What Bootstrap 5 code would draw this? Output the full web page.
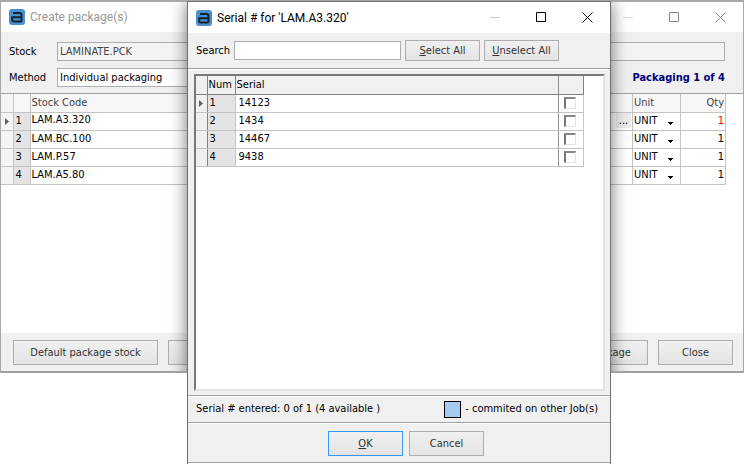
<!DOCTYPE html>
<html lang="en">
<head>
<meta charset="utf-8">
<meta name="viewport" content="width=device-width, initial-scale=1">
<title>Serial # for 'LAM.A3.320'</title>
<link rel="stylesheet" href="https://cdn.jsdelivr.net/npm/bootstrap@5.3.0/dist/css/bootstrap.min.css">
<style>
  body { font-family: "DejaVu Sans Condensed", "DejaVu Sans", sans-serif; font-size: 11px; line-height: 14px; color: #000; background: #fff; }
  .desktop { min-height: 100vh; overflow: hidden; }
  .win { background: #f0f0f0; border: 1px solid #8c8c8c; }
  .win-back { inset: 0 0 91px 0; overflow: hidden; border-color: #a8a8a8; border-top-width: 2px; border-bottom: 2px solid #a0a0a0; }
  .win-front { left: 187px; right: 133px; top: 1px; bottom: 0; border-color: #707070; border-bottom: 0; }
  .shade { left: 186px; right: 132px; top: 0; bottom: -40px; box-shadow: 0 0 16px rgba(0,0,0,.55); }
  .titlebar { height: 31px; background: #fff; padding-left: 8px; font-family: Roboto, "Open Sans", sans-serif; font-size: 12px; line-height: 16px; }
  .inactive { height: 30px; }
  .titlebar h1 { font: inherit; margin: 0; padding-left: 5px; }
  .inactive h1 { color: #999; }
  .cap { width: 46px; height: 30px; border: 0; background: none; padding: 0; color: #000; display: flex; align-items: center; justify-content: center; }
  .cap:disabled { color: #ccc; }
  .inactive .cap { color: #888; }
  .inactive .cap:disabled { color: #ddd; }
  .field { height: 19px; border: 1px solid #adadad; border-radius: 0; padding: 0 2px; font: inherit; color: #000; background: #fff; appearance: none; }
  .field.locked { background: #f4f4f4; color: #444; }
  .find { width: 167px; }
  .tool { border: 1px solid #adadad; border-radius: 0; padding: 0; width: 75px; height: 21px; font: inherit; color: #333; background: linear-gradient(#f0f0f0, #e4e4e4); }
  .tool.tall { height: 25px; }
  .tool.wide { width: 145px; }
  .tool.medium { width: 112px; }
  .tool.accept { border: 1px solid #3399ff; }
  .label-col { width: 48px; }
  .form-rows { padding: 10px 18px 6px 8px; gap: 7px; }
  .tool-row { padding: 7px 8px; }
  .grid { table-layout: fixed; width: 100%; border-collapse: collapse; margin: 0; }
  .grid th, .grid td { height: 18px; padding: 0 1px; border: 1px solid #c3c3c3; border-top: 0; font-weight: 400; line-height: 14px; vertical-align: middle; white-space: nowrap; overflow: hidden; text-align: left; }
  .grid td { padding-bottom: 1px; }
  .grid tr > :first-child { border-left: 0; }
  .grid .ind { background: #f4f4f4; padding: 0; text-align: center; }
  .grid .ind svg { display: block; margin: 0 auto; }
  .grid .num { background: #e4e4e4; padding-left: 2px; }
  .grid-back th { background: #f7f7f7; color: #444; }
  .grid-front th { background: #f0f0f0; border-color: #808080; }
  .grid-front .ind { border-right-color: #808080; background: #f0f0f0; }
  .grid-front tr > :nth-child(3) { border-right-color: #909090; }
  .grid-front td:nth-child(3) { padding-left: 3px; }
  .grid .qty { text-align: right; }
  .grid .short { color: #f00; }
  .unit { width: 100%; border: 0; padding: 0; height: 14px; font: inherit; color: #000; appearance: none; background: url("data:image/svg+xml,%3Csvg xmlns='http://www.w3.org/2000/svg' width='5' height='3'%3E%3Cpath d='M0 0h5v1H4v1H3v1H2V2H1V1H0z'/%3E%3C/svg%3E") no-repeat right 6px top 8px; display: block; }
  .dots { width: 15px; height: 15px; border: 0; padding: 0; background: #ececec; font: inherit; line-height: 12px; }
  .tick { appearance: none; display: block; width: 12px; height: 12px; margin: 0 0 0 4px; border: 1px solid #e3e3e3; border-top: 2px solid #888; border-left: 2px solid #777; background: #fff; }
  .rule { border-bottom: 1px solid #a0a0a0; box-shadow: 0 1px 0 #fff; }
  .back-body { padding-right: 17px; }
  .back-foot { padding: 7px 10px 6px 12px; gap: 10px; }
  .front-foot { padding: 8px 0 6px 14px; margin-bottom: 1px; gap: 6px; }
  .sunken { background: #fff; border: 2px solid #e3e3e3; border-top-color: #787878; border-left-color: #787878; margin: 5px 5px 4px 6px; padding-right: 19px; }
  .swatch { width: 17px; height: 17px; border: 1px solid #000; background: #a6caf0; }
  .stage { color: #000080; font-weight: 700; }
  .status { height: 27px; padding: 0 12px 0 8px; }
</style>
<script src="https://cdn.jsdelivr.net/npm/bootstrap@5.3.0/dist/js/bootstrap.bundle.min.js"></script>
</head>
<body>
<svg class="d-none" aria-hidden="true">
  <symbol id="logo" viewBox="0 0 16 16"><rect width="16" height="16" rx="3" fill="#4a90d0"/><path d="M4 4h6.500q2 0 2 2v5q0 1.500-1.500 1.500H5q-1.800 0-1.800-1.500V8.300H13" fill="none" stroke="#10242c" stroke-width="2"/></symbol>
  <symbol id="min" viewBox="0 0 11 11"><path d="M0 5.500h10" stroke="currentColor"/></symbol>
  <symbol id="max" viewBox="0 0 11 11"><path d="M.5 .5h9v9h-9z" fill="none" stroke="currentColor"/></symbol>
  <symbol id="cross" viewBox="0 0 11 11"><path d="M.5 .5l10 10M10.500 .5l-10 10" stroke="currentColor"/></symbol>
  <symbol id="arrow" viewBox="0 0 4 7"><path d="M0 0l4 3.500L0 7z" fill="#606060"/></symbol>
</svg>
<main class="desktop position-relative">

  <section class="win win-back position-absolute d-flex flex-column" aria-label="Create package(s)">
    <header class="titlebar inactive d-flex align-items-center">
      <svg width="16" height="16"><use href="#logo"/></svg>
      <h1 class="flex-grow-1">Create package(s)</h1>
      <button class="cap" aria-label="Minimize" disabled><svg width="11" height="11"><use href="#min"/></svg></button>
      <button class="cap" aria-label="Maximize"><svg width="11" height="11"><use href="#max"/></svg></button>
      <button class="cap" aria-label="Close window"><svg width="11" height="11"><use href="#cross"/></svg></button>
    </header>
    <div class="rule form-rows d-flex flex-column">
      <div class="d-flex align-items-center">
        <label class="label-col" for="stock">Stock</label>
        <input class="field locked flex-grow-1" id="stock" value="LAMINATE.PCK" readonly>
      </div>
      <div class="d-flex align-items-center">
        <label class="label-col" for="method">Method</label>
        <select class="field w-25" id="method"><option>Individual packaging</option></select>
        <span class="stage ms-auto">Packaging 1 of 4</span>
      </div>
    </div>
    <div class="back-body bg-white flex-grow-1">
      <table class="grid grid-back">
        <colgroup><col style="width:12px"><col style="width:17px"><col><col style="width:48px"><col style="width:45px"></colgroup>
        <thead><tr><th class="ind"></th><th></th><th>Stock Code</th><th>Unit</th><th class="qty">Qty</th></tr></thead>
        <tbody>
          <tr><td class="ind"><svg width="4" height="7"><use href="#arrow"/></svg></td><td class="num">1</td><td><div class="d-flex justify-content-between">LAM.A3.320<button class="dots" aria-label="Browse">...</button></div></td><td><select class="unit" aria-label="Unit 1"><option>UNIT</option></select></td><td class="qty short">1</td></tr>
          <tr><td class="ind"></td><td class="num">2</td><td>LAM.BC.100</td><td><select class="unit" aria-label="Unit 2"><option>UNIT</option></select></td><td class="qty">1</td></tr>
          <tr><td class="ind"></td><td class="num">3</td><td>LAM.P.57</td><td><select class="unit" aria-label="Unit 3"><option>UNIT</option></select></td><td class="qty">1</td></tr>
          <tr><td class="ind"></td><td class="num">4</td><td>LAM.A5.80</td><td><select class="unit" aria-label="Unit 4"><option>UNIT</option></select></td><td class="qty">1</td></tr>
        </tbody>
      </table>
    </div>
    <footer class="back-foot d-flex">
      <button class="tool tall wide">Default package stock</button>
      <button class="tool tall wide">Previous</button>
      <button class="tool tall medium ms-auto">Create package</button>
      <button class="tool tall">Close</button>
    </footer>
    <div class="shade position-absolute"></div>
  </section>

  <section class="win win-front position-absolute d-flex flex-column" role="dialog" aria-label="Serial numbers">
    <header class="titlebar d-flex align-items-center">
      <svg width="16" height="16"><use href="#logo"/></svg>
      <h1 class="flex-grow-1">Serial # for 'LAM.A3.320'</h1>
      <button class="cap" aria-label="Minimize" disabled><svg width="11" height="11"><use href="#min"/></svg></button>
      <button class="cap" aria-label="Maximize"><svg width="11" height="11"><use href="#max"/></svg></button>
      <button class="cap" aria-label="Close window"><svg width="11" height="11"><use href="#cross"/></svg></button>
    </header>
    <div class="rule tool-row d-flex align-items-center gap-1">
      <label for="search">Search</label>
      <input class="field find" id="search">
      <button class="tool"><u>S</u>elect All</button>
      <button class="tool"><u>U</u>nselect All</button>
    </div>
    <div class="sunken flex-grow-1">
      <table class="grid grid-front">
        <colgroup><col style="width:11px"><col style="width:28px"><col><col style="width:25px"></colgroup>
        <thead><tr><th class="ind"></th><th>Num</th><th>Serial</th><th></th></tr></thead>
        <tbody>
          <tr><td class="ind"><svg width="4" height="7"><use href="#arrow"/></svg></td><td class="num">1</td><td>14123</td><td><input class="tick" type="checkbox" aria-label="14123"></td></tr>
          <tr><td class="ind"></td><td class="num">2</td><td>1434</td><td><input class="tick" type="checkbox" aria-label="1434"></td></tr>
          <tr><td class="ind"></td><td class="num">3</td><td>14467</td><td><input class="tick" type="checkbox" aria-label="14467"></td></tr>
          <tr><td class="ind"></td><td class="num">4</td><td>9438</td><td><input class="tick" type="checkbox" aria-label="9438"></td></tr>
        </tbody>
      </table>
    </div>
    <div class="rule"></div>
    <div class="rule status d-flex align-items-center">
      <span>Serial # entered: 0 of 1 (4 available )</span>
      <span class="swatch ms-auto me-1"></span><span>- commited on other Job(s)</span>
    </div>
    <footer class="rule front-foot d-flex justify-content-center">
      <button class="tool tall accept"><u>O</u>K</button>
      <button class="tool tall">Cancel</button>
    </footer>
  </section>
</main>
</body>
</html>
